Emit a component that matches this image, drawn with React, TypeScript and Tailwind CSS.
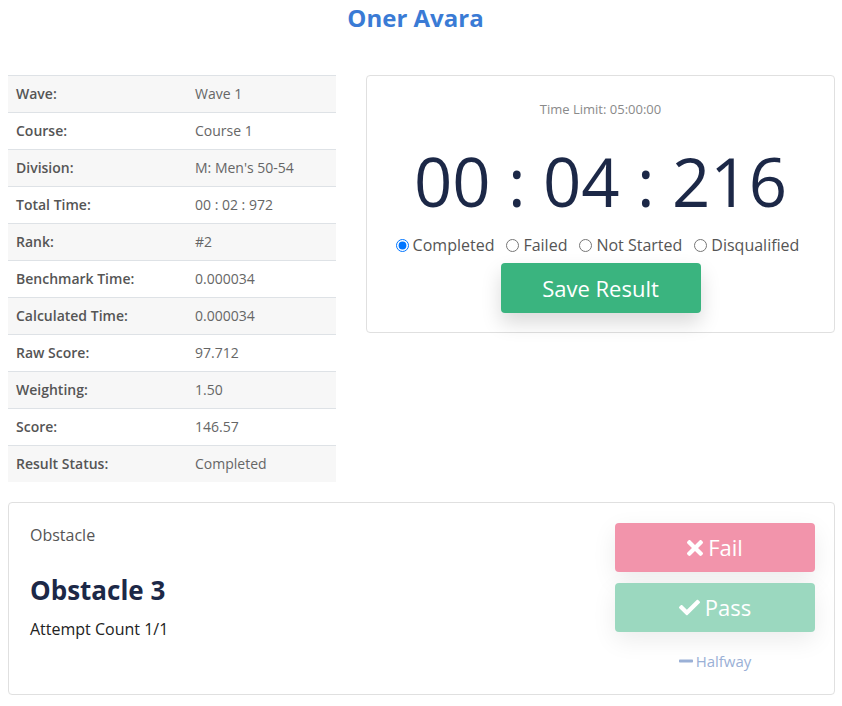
import React from "react";
import { FaTimes, FaCheck, FaMinus } from "react-icons/fa";

const rows: [string, string][] = [
  ["Wave:", "Wave 1"],
  ["Course:", "Course 1"],
  ["Division:", "M: Men's 50-54"],
  ["Total Time:", "00 : 02 : 972"],
  ["Rank:", "#2"],
  ["Benchmark Time:", "0.000034"],
  ["Calculated Time:", "0.000034"],
  ["Raw Score:", "97.712"],
  ["Weighting:", "1.50"],
  ["Score:", "146.57"],
  ["Result Status:", "Completed"],
];

const radios = ["Completed", "Failed", "Not Started", "Disqualified"];

export default function App() {
  return (
    <div
      className="min-h-[706px] bg-white pl-2 pr-[7px] text-[#555]"
      style={{ fontFamily: '"Open Sans", "Noto Sans", sans-serif' }}
    >
      <h1 className="pt-[3px] pr-[12px] text-center text-[24px] font-bold leading-[30px] text-[#3a7bd5]">
        Oner Avara
      </h1>
      <div className="mt-[42px] flex items-start gap-[30px]">
        <table className="w-[328px] border-collapse text-[14px] leading-[20px]">
          <tbody>
            {rows.map(([k, v], i) => (
              <tr
                key={k}
                className={`border-t border-[#dee2e6] ${i % 2 === 0 ? "bg-[#f7f7f7]" : "bg-white"}`}
              >
                <td className="w-[179px] px-2 py-2 font-semibold text-[#555]">{k}</td>
                <td className="px-2 py-2 text-[#666]">{v}</td>
              </tr>
            ))}
          </tbody>
        </table>
        <div className="flex flex-1 flex-col items-center rounded border border-[#e0e0e0] pb-[19px] pt-[23px]">
          <div className="text-[13px] leading-[20px] text-[#8a8a8a]">Time Limit: 05:00:00</div>
          <div className="mt-[29px] text-[67px] leading-none text-[#1c2847]">00 : 04 : 216</div>
          <div className="mt-[18px] flex items-center gap-[12px] pr-[6px] text-[16px] leading-[24px] text-[#555]">
            {radios.map((r, i) => (
              <label key={r} className="flex items-center gap-[4px]">
                <input type="radio" name="status" defaultChecked={i === 0} className="m-0 h-[13px] w-[13px]" />
                <span>{r}</span>
              </label>
            ))}
          </div>
          <button className="mt-[6px] h-[50px] w-[200px] rounded bg-[#3ab47f] text-[22px] text-white shadow-[0_10px_20px_rgba(0,0,0,0.15)]">
            Save Result
          </button>
        </div>
      </div>
      <div className="mt-[20px] flex items-start justify-between rounded border border-[#e0e0e0] pb-[23px] pl-[21px] pr-[19px] pt-[20px]">
        <div>
          <div className="text-[16px] leading-[24px] text-[#555]">Obstacle</div>
          <div className="mt-[26px] text-[26px] font-bold leading-[34px] text-[#1c2847]">Obstacle 3</div>
          <div className="mt-[10px] text-[16px] leading-[24px] text-[#222]">Attempt Count 1/1</div>
        </div>
        <div className="flex w-[200px] flex-col items-center">
          <button className="flex h-[49px] w-[200px] items-center justify-center gap-[5px] rounded bg-[#f294ab] text-[22px] text-white shadow-[0_8px_24px_rgba(0,0,0,0.08)]">
            <FaTimes className="h-[24px] w-[16px]" />
            <span>Fail</span>
          </button>
          <button className="mt-[11px] flex h-[49px] w-[200px] items-center justify-center gap-[5px] rounded bg-[#9bd8bf] text-[22px] text-white shadow-[0_8px_24px_rgba(0,0,0,0.08)]">
            <FaCheck className="h-[21px] w-[21px]" />
            <span>Pass</span>
          </button>
          <div className="mt-[19px] flex items-center gap-[3px] text-[15px] leading-[20px] text-[#9ab0d6]">
            <FaMinus className="h-[16px] w-[14px]" />
            <span>Halfway</span>
          </div>
        </div>
      </div>
    </div>
  );
}
